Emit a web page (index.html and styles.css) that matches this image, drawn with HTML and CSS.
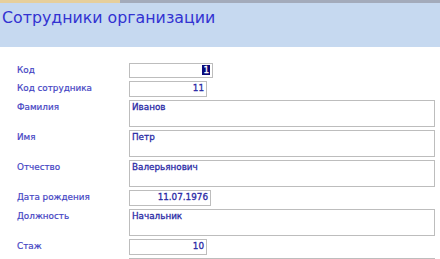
FILE: index.html
```html
<!DOCTYPE html>
<html lang="ru">
<head>
  <meta charset="UTF-8" />
  <title>Сотрудники организации</title>
  <link rel="stylesheet" href="styles.css">
</head>
<body>
  <div class="header">
    <div class="tabstrip"><span class="tab"></span></div>
    <h1>Сотрудники организации</h1>
  </div>

  <div class="form">
    <label>Код</label>
    <div class="field short num"><span class="selected">1</span></div>

    <label>Код сотрудника</label>
    <div class="field mid num">11</div>

    <label>Фамилия</label>
    <div class="field tall">Иванов</div>

    <label>Имя</label>
    <div class="field tall">Петр</div>

    <label>Отчество</label>
    <div class="field tall">Валерьянович</div>

    <label>Дата рождения</label>
    <div class="field date num">11.07.1976</div>

    <label>Должность</label>
    <div class="field tall">Начальник</div>

    <label>Стаж</label>
    <div class="field mid num">10</div>

    <label>Адрес</label>
    <div class="field tall"></div>
  </div>
</body>
</html>
```

FILE: styles.css
```css
body {
  margin: 0;
  font-family: 'DejaVu Sans', Verdana, sans-serif;
  background: white;
  overflow: hidden;
}
.header {
  background: #c6d9f0;
  height: 47px;
}
.tabstrip {
  height: 3px;
  background: #a3abbb;
  display: flex;
}
.tab {
  width: 120px;
  background: #e6cf9c;
}
h1 {
  margin: 0;
  padding: 5px 0 0 2px;
  font-size: 15.8px;
  font-weight: normal;
  color: #3232d2;
}
.form {
  display: grid;
  grid-template-columns: 129px 1fr;
  row-gap: 3px;
  padding: 16px 5px 0 0;
  font-size: 8.8px;
}
label {
  padding: 2px 0 0 17px;
  color: #4545c4;
  -webkit-text-stroke: 0.2px #4545c4;
}
.field {
  box-sizing: border-box;
  border: 1px solid #bdbdbd;
  color: #2b2ba6;
  padding: 1px 2px;
  background: white;
  -webkit-text-stroke: 0.3px #2b2ba6;
}
.num {
  text-align: right;
}
.short {
  width: 84px;
  height: 15px;
}
.mid {
  width: 78px;
  height: 16px;
}
.date {
  width: 82px;
  height: 16px;
}
.tall {
  height: 27px;
}
.selected {
  background: #0a0a7a;
  color: white;
  -webkit-text-stroke: 0.3px white;
  padding: 0 1px;
}
```
